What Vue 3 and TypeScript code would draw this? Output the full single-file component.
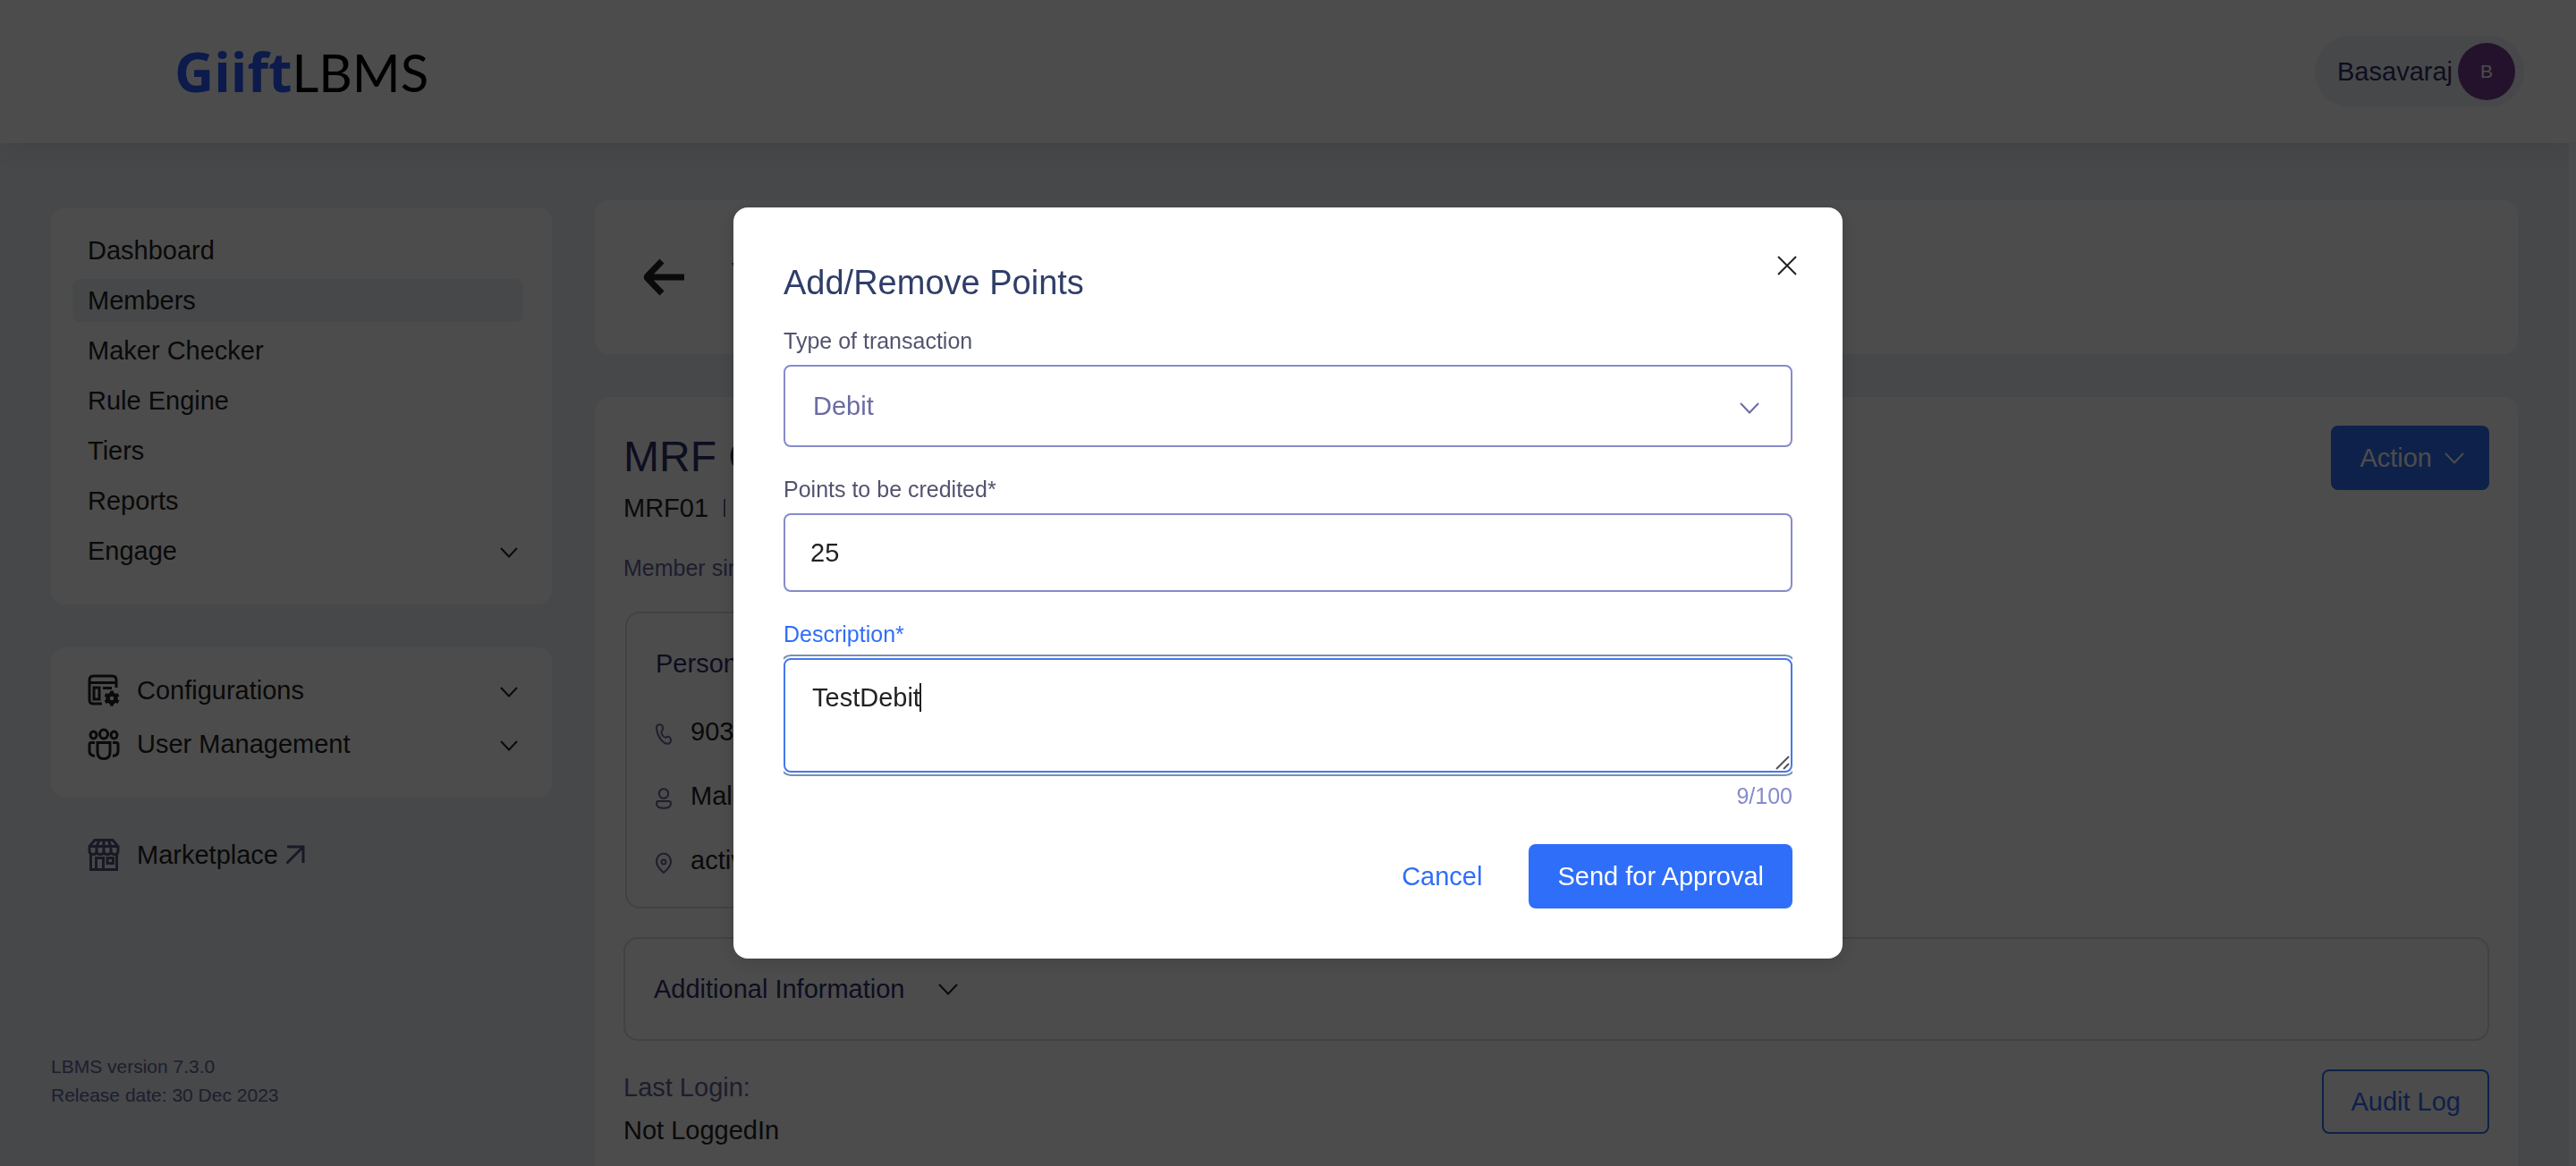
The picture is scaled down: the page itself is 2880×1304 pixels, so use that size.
<script setup lang="ts">
import { computed, ref } from 'vue'

interface NavItem {
  label: string
  active?: boolean
  expandable?: boolean
}

const navItems: NavItem[] = [
  { label: 'Dashboard' },
  { label: 'Members', active: true },
  { label: 'Maker Checker' },
  { label: 'Rule Engine' },
  { label: 'Tiers' },
  { label: 'Reports' },
  { label: 'Engage', expandable: true },
]

const transactionType = ref<string>('Debit')
const points = ref<string>('25')
const description = ref<string>('TestDebit')
const maxLength = 100
const counter = computed<string>(() => `${description.value.length}/${maxLength}`)
</script>

<template>
  <div class="app">
    <header class="topbar">
      <a class="logo" href="#"><span class="logo-brand">Giift</span><span>LBMS</span></a>
      <button class="user" type="button">
        <span>Basavaraj</span>
        <span class="avatar">B</span>
      </button>
    </header>

    <div class="body">
      <aside class="sidebar">
        <nav class="panel nav">
          <a
            v-for="item in navItems"
            :key="item.label"
            href="#"
            class="nav-row"
            :class="{ active: item.active }"
          >
            <span>{{ item.label }}</span>
            <svg v-if="item.expandable" class="chev-nav" viewBox="0 0 20 12"><path d="M1 1l9 9.500L19 1" /></svg>
          </a>
        </nav>

        <nav class="panel tools">
          <a href="#" class="tool-row">
            <svg class="tool-icon" viewBox="0 0 36 36">
              <path d="M32 15V6.500Q32 2 27.500 2H6.500Q2 2 2 6.500v22.500Q2 33 6.500 33H16M2 9.500h30M17 15.500h10" />
              <rect x="7" y="15" width="6" height="13" />
              <circle cx="27" cy="27" r="4.500" stroke-width="4.500" />
              <path stroke-width="4" d="M27 18.500v3M27 32.500v3M19.600 22.700l2.600 1.500M31.800 29.800l2.600 1.500M19.600 31.300l2.600-1.500M31.800 24.200l2.600-1.500" />
            </svg>
            <span class="tool-label">Configurations</span>
            <svg class="chev-nav" viewBox="0 0 20 12"><path d="M1 1l9 9.500L19 1" /></svg>
          </a>
          <a href="#" class="tool-row">
            <svg class="tool-icon" viewBox="0 0 36 36">
              <ellipse cx="18" cy="7" rx="4.500" ry="5" />
              <ellipse cx="6.500" cy="8" rx="3.500" ry="4" />
              <ellipse cx="29.500" cy="8" rx="3.500" ry="4" />
              <path d="M11 16.500h14V27q0 7.500-7 7.500T11 27zM8 16.500H4Q2 16.500 2 19v7q0 5 6 5.500M28 16.500h4q2 0 2 2.500v7q0 5-6 5.500" />
            </svg>
            <span class="tool-label">User Management</span>
            <svg class="chev-nav" viewBox="0 0 20 12"><path d="M1 1l9 9.500L19 1" /></svg>
          </a>
        </nav>

        <a href="#" class="tool-row market">
          <svg class="tool-icon" viewBox="0 0 36 36">
            <path d="M8 1.500h20l6 7v5q0 4-4 4t-4-4q0 4-4 4t-4-4q0 4-4 4t-4-4q0 4-4 4t-4-4v-5zM2 8.500h32M13 1.500l-3 7v5M23 1.500l3 7v5M18 1.500v12M3.500 17v17.500h29V17M9.500 34.500V21.500h8v13M22 21.500h6.500v6H22z" />
          </svg>
          <span>Marketplace</span>
          <svg class="external" viewBox="0 0 22 22"><path d="M2 2h18v18M20 2L1.500 20.500" /></svg>
        </a>

        <p class="version">LBMS version 7.3.0<br />Release date: 30 Dec 2023</p>
      </aside>

      <main class="main">
        <section class="panel page-head">
          <button class="back" type="button" aria-label="Back">
            <svg viewBox="0 0 46 42"><path d="M46 21H6M21 3L5 19.500q-1.300 1.500 0 3L21 39" /></svg>
          </button>
          <h1>V</h1>
        </section>

        <section class="panel member">
          <div class="member-head">
            <div>
              <h2>MRF C</h2>
              <div class="member-id"><span>MRF01</span><i class="bar"></i></div>
              <p class="since">Member since</p>
            </div>
            <button class="btn primary action" type="button">
              Action
              <svg class="chev" viewBox="0 0 22 13"><path d="M1 1l10 10.500L21 1" /></svg>
            </button>
          </div>

          <div class="box personal">
            <h3>Personal</h3>
            <ul>
              <li>
                <svg viewBox="0 0 18 24"><path d="M1.200 7C.5 3 2 1.200 4.500 1.200c2.300 0 3.700 2 3.700 4.300 0 2-1.700 2.500-1.700 4.300 0 2.500 2.500 6 4.500 6 1.300 0 1.700-1 3-1 1.700 0 3 2 3 4.200 0 2.700-1.700 4-4.300 3.700C7.700 22 2.300 15 1.200 7z" /></svg>
                <span>903</span>
              </li>
              <li>
                <svg viewBox="0 0 18 24"><ellipse cx="9" cy="6.500" rx="5.200" ry="5.300" /><path d="M3 15h12q2 0 2 2.500 0 5.300-8 5.300t-8-5.300Q1 15 3 15z" /></svg>
                <span>Male</span>
              </li>
              <li>
                <svg viewBox="0 0 18 24"><path d="M9 23C5 19.500 1 15.500 1 10.500a8 9 0 0 1 16 0C17 15.500 13 19.500 9 23z" /><circle cx="9" cy="11" r="2.500" /></svg>
                <span>active</span>
              </li>
            </ul>
          </div>

          <button class="box additional" type="button">
            Additional Information
            <svg class="chev" viewBox="0 0 22 13"><path d="M1 1l10 10.500L21 1" /></svg>
          </button>

          <div class="member-foot">
            <div class="login">
              <div class="muted">Last Login:</div>
              <div>Not LoggedIn</div>
            </div>
            <button class="btn outline" type="button">Audit Log</button>
          </div>
        </section>
      </main>
    </div>

    <div class="overlay">
      <form class="modal" role="dialog" aria-modal="true" aria-labelledby="dialog-title" @submit.prevent>
        <button class="close" type="button" aria-label="Close">
          <svg viewBox="0 0 22 22"><path d="M1 1l20 20M21 1L1 21" /></svg>
        </button>
        <h2 id="dialog-title">Add/Remove Points</h2>

        <div class="field">
          <label for="type">Type of transaction</label>
          <div class="control">
            <select id="type" v-model="transactionType">
              <option>Debit</option>
              <option>Credit</option>
            </select>
            <svg class="chev select-chev" viewBox="0 0 22 13"><path d="M1 1l10 10.500L21 1" /></svg>
          </div>
        </div>

        <div class="field">
          <label for="points">Points to be credited*</label>
          <input id="points" v-model="points" type="text" inputmode="numeric" />
        </div>

        <div class="field focused">
          <label for="description">Description*</label>
          <div class="control">
            <textarea id="description" v-model="description" :maxlength="maxLength"></textarea>
            <i class="caret"></i>
            <svg class="grip" viewBox="0 0 16 16"><path d="M1 15L15 1M9 15l6-6" /></svg>
          </div>
          <div class="counter">{{ counter }}</div>
        </div>

        <div class="buttons">
          <button class="btn text" type="button">Cancel</button>
          <button class="btn primary" type="submit">Send for Approval</button>
        </div>
      </form>
    </div>
  </div>
</template>

<style>
body {
  margin: 0;
}
</style>

<style scoped>
.app,
.app * {
  box-sizing: border-box;
}

.app {
  min-height: 100vh;
  display: flex;
  flex-direction: column;
  background: #edf1f6;
  color: #222;
  font-family: "Liberation Sans", Arial, sans-serif;
  font-size: 29px;
}

h1,
h2,
h3,
p,
ul {
  margin: 0;
  padding: 0;
  font-weight: 400;
}

a {
  color: inherit;
  text-decoration: none;
}

button,
input,
select,
textarea {
  font: inherit;
  color: inherit;
  margin: 0;
  border: 0;
  background: none;
}

svg {
  display: block;
  flex: none;
  fill: none;
  stroke: currentColor;
  stroke-width: 2;
}

/* Top bar */
.topbar {
  position: relative;
  display: flex;
  align-items: center;
  justify-content: space-between;
  height: 160px;
  padding: 0 58px 0 195px;
  background: #fff;
  box-shadow: 0 8px 32px rgba(0, 0, 0, 0.08);
}

.logo {
  display: flex;
  align-items: baseline;
  font-family: Lato, "Liberation Sans", sans-serif;
  font-size: 58px;
  line-height: 72px;
  color: #000;
}

.logo-brand {
  color: #2b5aff;
  font-family: "Open Sans", "Noto Sans", sans-serif;
  font-size: 61px;
  font-weight: 700;
}

.user {
  display: flex;
  align-items: center;
  gap: 6px;
  height: 80px;
  padding: 0 10px 0 25px;
  border-radius: 40px;
  background: #edf1f6;
  color: #2f2f6b;
}

.avatar {
  width: 64px;
  border-radius: 50%;
  background: #7b3f93;
  color: #fff;
  font-size: 21px;
  line-height: 64px;
  text-align: center;
}

/* Page columns */
.body {
  flex: 1;
  display: flex;
  gap: 48px;
  padding: 64px 57px 0;
  border-right: 8px solid #fff;
}

.panel {
  background: #fff;
  border-radius: 16px;
}

.sidebar {
  flex: none;
  width: 560px;
  padding-top: 8px;
}

.nav {
  display: flex;
  flex-direction: column;
  gap: 8px;
  padding: 24px 32px 36px 24px;
}

.nav-row {
  display: flex;
  align-items: center;
  justify-content: space-between;
  padding: 0 6px 0 17px;
  border-radius: 8px;
  line-height: 48px;
}

.nav-row.active {
  background: #edf1f6;
}

.chev-nav {
  width: 20px;
  height: 12px;
  margin-top: 3px;
}

.tools {
  margin-top: 48px;
  padding: 18px 38px 30px 41px;
}

.tool-row {
  display: flex;
  align-items: center;
  height: 60px;
}

.tool-icon {
  width: 36px;
  height: 36px;
  margin-right: 19px;
  stroke-width: 3;
}

.tool-label {
  flex: 1;
}

.market {
  margin-top: 34px;
  padding-left: 41px;
}

.market svg {
  color: #55557f;
}

.external {
  width: 22px;
  height: 22px;
  margin-left: 8px;
  stroke-width: 3;
}

.version {
  margin-top: 191px;
  color: #64649c;
  font-size: 21px;
  line-height: 32px;
}

.main {
  flex: 1;
  display: flex;
  flex-direction: column;
  gap: 48px;
}

.page-head {
  display: flex;
  align-items: center;
  gap: 53px;
  height: 172px;
  padding: 0 54px;
  color: #2f2f6b;
}

.page-head h1 {
  font-size: 48px;
}

.back {
  padding: 0;
  color: #222;
}

.back svg {
  width: 46px;
  height: 42px;
  stroke-width: 7;
}

/* Member card */
.member {
  flex: 1;
  padding: 32px 32px 0;
  border-radius: 16px 16px 0 0;
}

.member-head {
  display: flex;
  align-items: flex-start;
  justify-content: space-between;
}

.member-head h2 {
  color: #2f2f6b;
  font-size: 48px;
  line-height: 70px;
}

.member-id {
  display: flex;
  align-items: center;
  gap: 17px;
  line-height: 44px;
}

.bar {
  width: 2px;
  height: 20px;
  background: #64649c;
}

.since {
  margin-top: 24px;
  color: #64649c;
  font-size: 25px;
  line-height: 42px;
}

.box {
  border: 2px solid #d9d9ec;
  border-radius: 16px;
}

.personal {
  width: 50%;
  margin: 28px 0 0 2px;
  padding: 36px 32px 16px;
}

.personal h3 {
  margin-bottom: 20px;
  color: #2f2f6b;
  font-size: 29px;
  line-height: 40px;
}

.personal li {
  display: flex;
  align-items: center;
  gap: 21px;
  line-height: 72px;
}

.personal svg {
  width: 18px;
  height: 24px;
  margin-top: 6px;
  color: #64649c;
}

.additional {
  display: flex;
  align-items: center;
  gap: 37px;
  width: 100%;
  height: 116px;
  margin-top: 32px;
  padding: 0 32px;
  color: #2f2f6b;
}

.chev {
  width: 22px;
  height: 13px;
}

.additional .chev {
  color: #222;
}

.member-foot {
  display: flex;
  align-items: flex-start;
  justify-content: space-between;
  margin-top: 28px;
}

.login {
  line-height: 48px;
}

.muted {
  color: #64649c;
}

.member-foot .btn {
  margin-top: 4px;
}

/* Buttons */
.btn {
  display: flex;
  align-items: center;
  height: 72px;
  padding: 0 32px;
  border-radius: 8px;
}

.primary {
  background: #2f6ef8;
  color: #fff;
}

.outline {
  padding: 0 30px;
  border: 2px solid #2f6ef8;
  color: #2f6ef8;
}

.text {
  color: #2f6ef8;
}

.action {
  gap: 14px;
  padding-right: 28px;
}

/* Dialog */
.overlay {
  position: fixed;
  inset: 0;
  display: flex;
  align-items: center;
  justify-content: center;
  background: rgba(0, 0, 0, 0.7);
}

.modal {
  position: relative;
  width: 1240px;
  max-width: 100%;
  padding: 56px;
  border-radius: 16px;
  background: #fff;
  box-shadow: 0 4px 24px rgba(0, 0, 0, 0.15);
}

.close {
  position: absolute;
  top: 41px;
  right: 38px;
  padding: 13px;
}

.close svg {
  width: 22px;
  height: 22px;
}

.modal h2 {
  margin-bottom: 21px;
  color: #2f3e68;
  font-size: 38px;
  line-height: 56px;
}

.field + .field {
  margin-top: 31px;
}

.field label {
  display: block;
  margin-bottom: 11px;
  color: #53536f;
  font-size: 25px;
  line-height: 32px;
}

.control {
  position: relative;
}

.field input,
.field select,
.field textarea {
  display: block;
  width: 100%;
  border: 2px solid #868bcb;
  border-radius: 8px;
  background: #fff;
}

.field input {
  height: 88px;
  padding: 0 28px;
}

.field select {
  height: 92px;
  padding: 0 31px;
  color: #6a6ca3;
  appearance: none;
}

.select-chev {
  position: absolute;
  top: 42px;
  right: 37px;
  color: #6a6ca3;
  pointer-events: none;
}

.field textarea {
  height: 128px;
  padding: 20px 30px;
  line-height: 44px;
  resize: none;
}

.focused {
  overflow-x: clip;
}

.focused label {
  color: #2f6ef8;
}

.focused textarea {
  border-color: #4678e8;
  outline: 2px solid #7a8fb3;
  outline-offset: 2px;
}

.caret {
  position: absolute;
  top: 28px;
  left: 152px;
  width: 2px;
  height: 32px;
  background: #222;
}

.grip {
  position: absolute;
  right: 3px;
  bottom: 3px;
  width: 16px;
  height: 16px;
  color: #555;
}

.counter {
  margin-top: 10px;
  color: #868bcb;
  font-size: 25px;
  line-height: 32px;
  text-align: right;
}

.buttons {
  display: flex;
  justify-content: flex-end;
  gap: 20px;
  margin-top: 38px;
}
</style>
